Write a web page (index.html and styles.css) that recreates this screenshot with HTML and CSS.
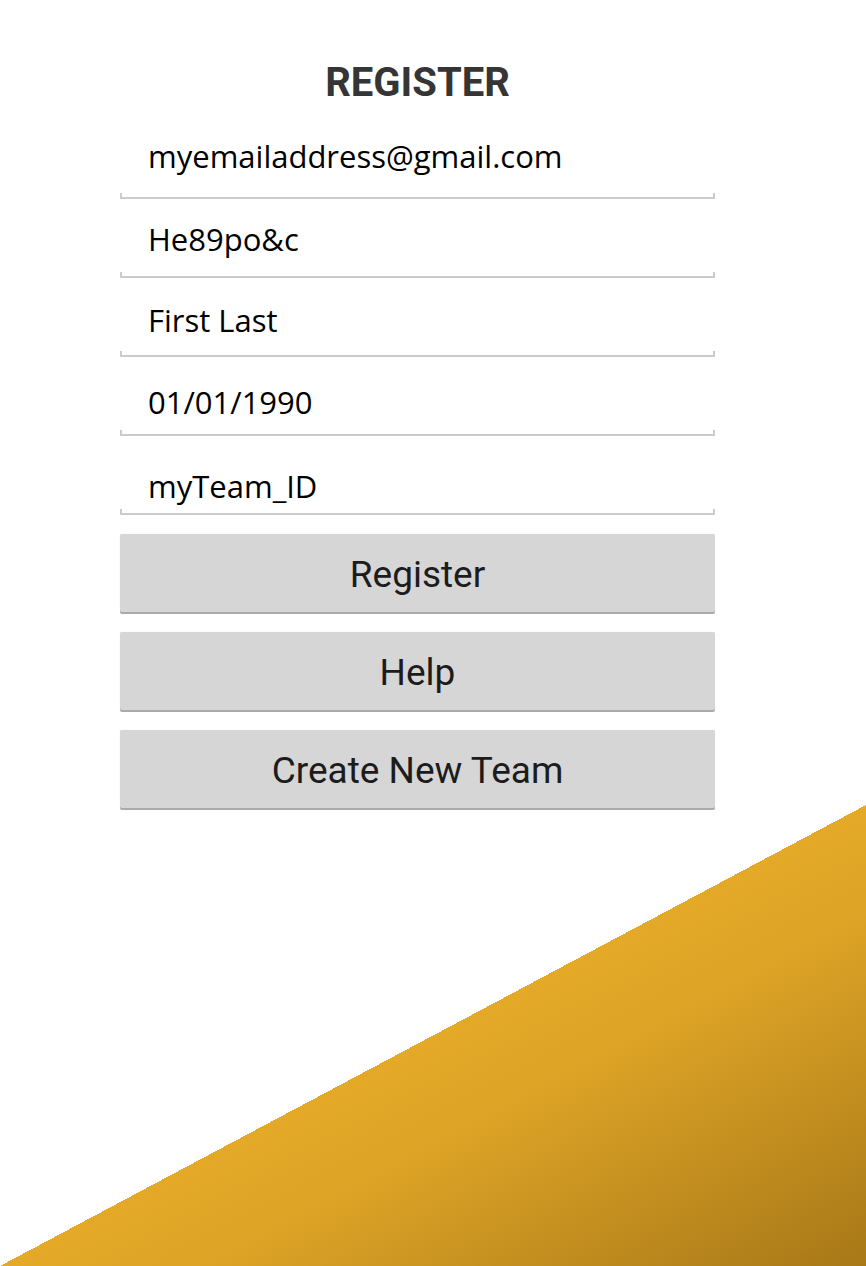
FILE: index.html
```html
<!DOCTYPE html>
<html>
<head>
<meta charset="utf-8">
<link rel="stylesheet" href="styles.css">
</head>
<body>
<main class="form">
  <h1 class="title">REGISTER</h1>
  <div class="field field-email"><span class="value">myemailaddress@gmail.com</span></div>
  <div class="field field-password"><span class="value">He89po&amp;c</span></div>
  <div class="field field-name"><span class="value">First Last</span></div>
  <div class="field field-dob"><span class="value">01/01/1990</span></div>
  <div class="field field-team"><span class="value">myTeam_ID</span></div>
  <div class="buttons">
    <button class="btn">Register</button>
    <button class="btn">Help</button>
    <button class="btn">Create New Team</button>
  </div>
</main>
</body>
</html>
```
FILE: styles.css
```css
html, body {
  margin: 0;
  padding: 0;
}
body {
  width: 866px;
  height: 1266px;
  overflow: hidden;
  background-color: #fff;
  background-image: linear-gradient(to bottom right, rgba(228,169,39,0) 50%, #e4a927 50%, #dca326 62%, #a87818 100%);
  background-repeat: no-repeat;
  background-size: 866px 461px;
  background-position: right bottom;
}
.form {
  width: 595px;
  margin-left: 120px;
  padding-top: 63px;
  display: flex;
  flex-direction: column;
}
.title {
  margin: 0 0 17px;
  font-family: Roboto, sans-serif;
  font-weight: bold;
  font-size: 40px;
  line-height: 40px;
  color: #353535;
  text-align: center;
}
.field {
  position: relative;
  height: 79px;
  box-sizing: border-box;
  border-bottom: 2px solid #cbcbcb;
  display: flex;
  align-items: flex-end;
  padding: 0 0 26px 28px;
}
.field-email { padding-bottom: 25px; }
.field-password { padding-bottom: 21px; }
.field-name { padding-bottom: 19px; }
.field-dob { padding-bottom: 16px; }
.field-team { padding-bottom: 11px; }
.field::before,
.field::after {
  content: "";
  position: absolute;
  bottom: -2px;
  width: 2px;
  height: 6px;
  background: #cbcbcb;
}
.field::before { left: 0; }
.field::after { right: 0; }
.value {
  font-family: "Open Sans", "Noto Sans", sans-serif;
  font-size: 31px;
  line-height: 31px;
  color: #000;
}
.buttons {
  margin-top: 19px;
  display: flex;
  flex-direction: column;
  gap: 20px;
}
.btn {
  height: 78px;
  border: none;
  border-radius: 2px;
  background: #d6d6d6;
  box-shadow: 0 2px 0 #aaaaaa, 0 0 1px rgba(0,0,0,0.15);
  font-family: Roboto, sans-serif;
  font-size: 37px;
  color: #1c1c1c;
  padding: 2px 0 0;
}
```
